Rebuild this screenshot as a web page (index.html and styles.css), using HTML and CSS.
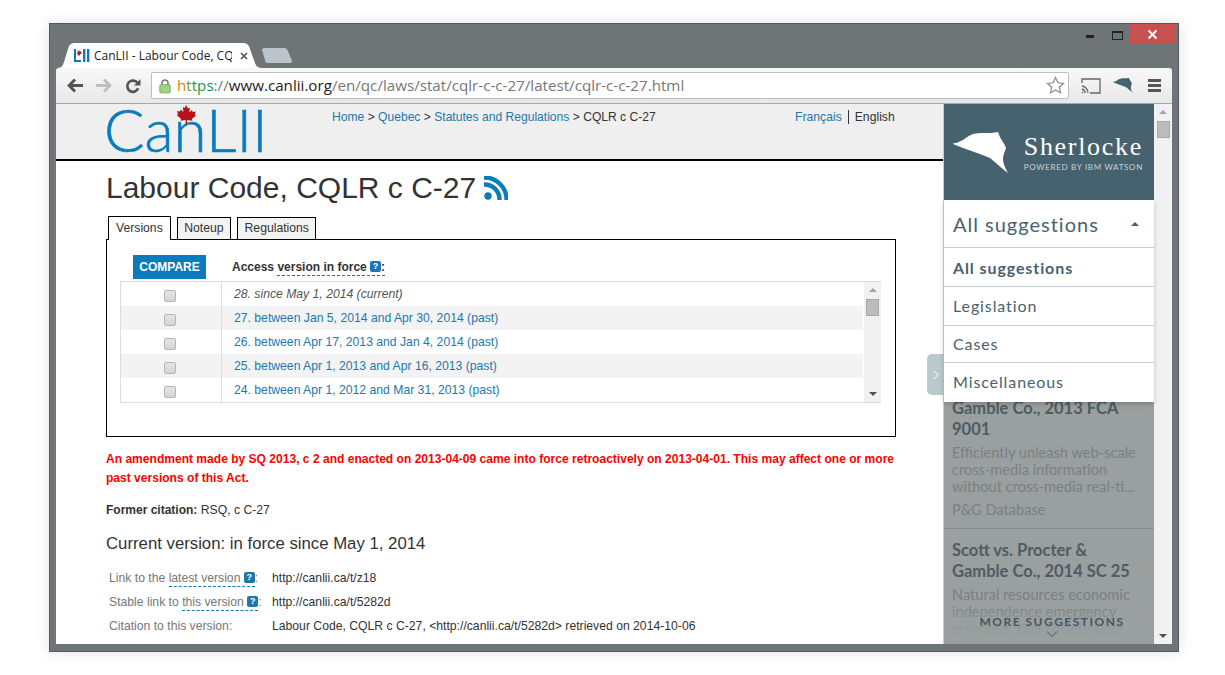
FILE: index.html
```html
<!DOCTYPE html>
<html lang="en">
<head>
    <meta charset="UTF-8">
    <title>CanLII - Labour Code, CQLR c C-27</title>
    <link rel="stylesheet" href="styles.css">
</head>
<body>
    <div class="window">
        <!-- Window controls -->
        <div class="win-controls">
            <span class="win-min"></span>
            <span class="win-max"></span>
            <span class="win-close">
                <svg width="11" height="11" viewBox="0 0 11 11"><path d="M1.5 1.5l8 8M9.5 1.5l-8 8" stroke="#fff" stroke-width="2"/></svg>
            </span>
        </div>

        <!-- Tab strip -->
        <div class="tabstrip">
            <div class="tab">
                <svg class="tab-shape" width="206" height="25" viewBox="0 0 206 25"><path d="M0 25C5 25 6 22 7 19L11 6C12 2 14 0 18 0H186C190 0 192 2 193 6L198 20C199 23 201 25 206 25Z" fill="#fff"/></svg>
                <svg class="favicon" width="16" height="13" viewBox="0 0 16 13">
                    <path d="M0 0h2v11h5v2H0z" fill="#0a7cbd"/>
                    <rect x="9" width="2.4" height="13" fill="#0a7cbd"/>
                    <rect x="13" width="2.4" height="13" fill="#0a7cbd"/>
                    <path d="M5 1l1 1.500 1.500-.5-.5 1.700 1 .8-2 .8v1.500l-1-.6-1.500.6.500-1.500-1.500-.8 1.200-.8-.5-1.500 1.300.3z" fill="#c8171e"/>
                </svg>
                <span class="tab-title">CanLII - Labour Code, CQLR c C-27</span>
                <svg class="tab-x" width="8" height="8" viewBox="0 0 8 8"><path d="M1 1l6 6M7 1L1 7" stroke="#555" stroke-width="1.600"/></svg>
            </div>
            <svg class="newtab" width="32" height="15" viewBox="0 0 32 15"><path d="M1 2C1 1 2 0 3 0H23C25 0 26 1 27 3L31 13C31 14 31 15 29 15H7C5 15 4 14 4 12Z" fill="#bcc4cb"/></svg>
        </div>

        <!-- Toolbar -->
        <div class="toolbar">
            <svg class="nav-icon" width="16" height="15" viewBox="0 0 16 15"><path d="M8 1.500L2.200 7.500l5.800 6M2.500 7.500H16" fill="none" stroke="#555" stroke-width="3"/></svg>
            <svg class="nav-icon" width="16" height="15" viewBox="0 0 16 15"><path d="M8 1.500l5.800 6-5.800 6M13.500 7.500H0" fill="none" stroke="#bfbfbf" stroke-width="3"/></svg>
            <svg class="nav-icon" width="16" height="16" viewBox="0 0 17 17"><path d="M14 11a6 6 0 1 1-.5-5.500" fill="none" stroke="#555" stroke-width="2.800"/><path d="M16.500 1v7h-7z" fill="#555"/></svg>
            <div class="omnibox">
                <svg class="lock" width="12" height="16" viewBox="0 0 14 17"><path d="M3.500 8V5a3.500 3.500 0 0 1 7 0v3" fill="none" stroke="#777" stroke-width="1.700"/><rect x="1" y="7" width="12" height="9.500" rx="1" fill="#9fd47f" stroke="#6ea552"/></svg>
                <span class="url"><span class="url-scheme"><span class="u1">h</span><span class="u2">t</span><span class="u3">t</span><span class="u4">ps</span></span><span class="url-sep">://</span><span class="url-host">www.canlii.org</span><span class="url-sep">/en/qc/laws/stat/cqlr-c-c-27/latest/cqlr-c-c-27.html</span></span>
                <svg class="star" width="19" height="19" viewBox="0 0 19 19"><path d="M9.500 1.500l2.400 5.300 5.700.6-4.300 3.800 1.300 5.700-5.100-3-5.100 3 1.300-5.700L1.400 7.400l5.700-.6z" fill="#fff" stroke="#8a8a8a" stroke-width="1.200"/></svg>
            </div>
            <svg class="tool-icon" width="20" height="16" viewBox="0 0 20 16"><path d="M1 5V1h18v14H9" fill="none" stroke="#666" stroke-width="1.300"/><path d="M1 8a7 7 0 0 1 6 7M1 11a4 4 0 0 1 3 4M1 14l1 1" fill="none" stroke="#666" stroke-width="1.300"/></svg>
            <svg class="tool-icon" width="20" height="15" viewBox="0 0 56 42"><path d="M0 11.500C4 11 7 9.500 10 8 14 5 17 3 20 2c4-1 7-1 10-1 6 0 11 0 15-1 1 3 2 5 3 7 2 3 4 6 5 9-1 3-3 7-3 11 0 5 3 10 5 14C46 34 41 29 37 26 26 21 11 17 0 12z" fill="#47626f"/></svg>
            <span class="menu-icon"><i></i><i></i><i></i></span>
        </div>

        <!-- Page area -->
        <div class="viewport">
            <div class="page">
                <header class="site-head">
                    <div class="logo">
                        <span class="logo-text">CanLII</span>
                        <svg class="leaf" width="20" height="20" viewBox="0 0 20 20"><path d="M10 0l2 3.500 2-1-.7 5 2.700-2.500.8 2 3-.5-1 3.200 1.200.8-4.200 3.500.6 1.800-5.200-.8-.4 4.500H9.600l.1-4.500-5.200.8.600-1.800L.8 10l1.200-.8L1 6l3 .5.800-2 2.700 2.500-.7-5 2 1z" fill="#b5121b"/></svg>
                    </div>
                    <nav class="crumbs"><a href="#">Home</a> &gt; <a href="#">Quebec</a> &gt; <a href="#">Statutes and Regulations</a> &gt; CQLR c C-27</nav>
                    <div class="langs"><a href="#">Français</a><span>English</span></div>
                </header>

                <main class="content">
                    <h1 class="title">Labour Code, CQLR c C-27
                        <svg class="rss" width="24" height="24" viewBox="0 0 24 24"><circle cx="4" cy="20" r="3.700" fill="#0a7cbd"/><path d="M0 8.500A15 15 0 0 1 15.500 24M0 1.500A22 22 0 0 1 22.500 24" fill="none" stroke="#0a7cbd" stroke-width="4.300"/></svg>
                    </h1>

                    <div class="tabs">
                        <span class="page-tab active">Versions</span>
                        <span class="page-tab">Noteup</span>
                        <span class="page-tab">Regulations</span>
                    </div>

                    <section class="versions">
                        <div class="versions-head">
                            <span class="compare">COMPARE</span>
                            <span class="access">Access <span class="dashed">version in force <i class="help">?</i>:</span></span>
                        </div>
                        <div class="list">
                            <div class="rows">
                                <div class="row current"><span class="check"><b></b></span><span class="row-text">28. since May 1, 2014 (current)</span></div>
                                <div class="row alt"><span class="check"><b></b></span><a href="#" class="row-text">27. between Jan 5, 2014 and Apr 30, 2014 (past)</a></div>
                                <div class="row"><span class="check"><b></b></span><a href="#" class="row-text">26. between Apr 17, 2013 and Jan 4, 2014 (past)</a></div>
                                <div class="row alt"><span class="check"><b></b></span><a href="#" class="row-text">25. between Apr 1, 2013 and Apr 16, 2013 (past)</a></div>
                                <div class="row"><span class="check"><b></b></span><a href="#" class="row-text">24. between Apr 1, 2012 and Mar 31, 2013 (past)</a></div>
                            </div>
                            <div class="scrollbar small">
                                <span class="arrow up"></span>
                                <span class="thumb"></span>
                                <span class="arrow down"></span>
                            </div>
                        </div>
                    </section>

                    <p class="warning">An amendment made by SQ 2013, c 2 and enacted on 2013-04-09 came into force retroactively on 2013-04-01. This may affect one or more past versions of this Act.</p>
                    <p class="former"><strong>Former citation:</strong> RSQ, c C-27</p>
                    <h2 class="current-version">Current version: in force since May 1, 2014</h2>

                    <div class="meta">
                        <div class="meta-row"><span class="meta-label">Link to the <span class="dashed">latest version <i class="help">?</i></span>:</span><span>http://canlii.ca/t/z18</span></div>
                        <div class="meta-row"><span class="meta-label">Stable link to <span class="dashed">this version <i class="help">?</i></span>:</span><span>http://canlii.ca/t/5282d</span></div>
                        <div class="meta-row"><span class="meta-label">Citation to this version:</span><span>Labour Code, CQLR c C-27, &lt;http://canlii.ca/t/5282d&gt; retrieved on 2014-10-06</span></div>
                    </div>
                </main>
            </div>

            <!-- Sherlocke extension panel -->
            <aside class="sherlocke">
                <div class="handle">
                    <svg width="6" height="10" viewBox="0 0 6 10"><path d="M1 1l4 4-4 4" fill="none" stroke="#fff"/></svg>
                </div>
                <div class="brand">
                    <svg class="hat" width="56" height="42" viewBox="0 0 56 42"><path d="M0 11.500C4 11 7 9.500 10 8 14 5 17 3 20 2c4-1 7-1 10-1 6 0 11 0 15-1 1 3 2 5 3 7 2 3 4 6 5 9-1 3-3 7-3 11 0 5 3 10 5 14C46 34 41 29 37 26 26 21 11 17 0 12z" fill="#fff"/></svg>
                    <div class="brand-text">
                        <div class="brand-name">Sherlocke</div>
                        <div class="brand-sub">POWERED BY IBM WATSON</div>
                    </div>
                </div>
                <div class="filter">
                    <div class="filter-head"><span>All suggestions</span><span class="caret"></span></div>
                    <div class="filter-item selected">All suggestions</div>
                    <div class="filter-item">Legislation</div>
                    <div class="filter-item short">Cases</div>
                    <div class="filter-item last">Miscellaneous</div>
                </div>
                <div class="results">
                    <div class="result">
                        <h3>Gamble Co., 2013 FCA 9001</h3>
                        <p>Efficiently unleash web-scale cross-media information without cross-media real-ti...</p>
                        <p class="source">P&amp;G Database</p>
                    </div>
                    <div class="result">
                        <h3>Scott vs. Procter &amp; Gamble Co., 2014 SC 25</h3>
                        <p>Natural resources economic independence emergency response, civil society save</p>
                    </div>
                    <div class="more">
                        <span>MORE SUGGESTIONS</span>
                        <svg width="12" height="6" viewBox="0 0 12 6"><path d="M1 .5l5 5 5-5" fill="none" stroke="#47565e"/></svg>
                    </div>
                </div>
            </aside>

            <div class="scrollbar">
                <span class="arrow up"></span>
                <span class="thumb"></span>
                <span class="arrow down"></span>
            </div>
        </div>
    </div>
</body>
</html>
```

FILE: styles.css
```css
/* Reset some default styles */
* {
    margin: 0;
    padding: 0;
    box-sizing: border-box;
}

html, body {
    height: 675px;
    overflow: hidden;
}

body {
    background-color: #fff;
    font-family: "Liberation Sans", Arial, sans-serif;
    font-size: 12.2px;
    color: #333;
}

a {
    color: #1f77ad;
    text-decoration: none;
}

/* Browser window */
.window {
    position: absolute;
    left: 49px;
    top: 23px;
    width: 1130px;
    height: 629px;
    background-color: #6f7477;
    border: 1px solid #54585b;
    box-shadow: 0 0 14px rgba(0, 0, 0, 0.12);
    padding: 19px 6px 7px;
    display: flex;
    flex-direction: column;
}

.win-controls {
    position: absolute;
    top: 0;
    right: 3px;
    display: flex;
    align-items: flex-start;
}

.win-min {
    width: 8px;
    height: 3px;
    background-color: #222;
    margin: 11px 18px 0 0;
}

.win-max {
    width: 11px;
    height: 9px;
    border: 1px solid #222;
    border-top-width: 2px;
    margin: 7px 7px 0 0;
}

.win-close {
    width: 45px;
    height: 20px;
    background-color: #c75050;
    display: flex;
    align-items: center;
    justify-content: center;
}

.tabstrip {
    height: 25px;
    display: flex;
    align-items: flex-end;
    flex-shrink: 0;
}

.tab {
    position: relative;
    width: 206px;
    height: 25px;
    margin-left: 1px;
    display: flex;
    align-items: center;
    padding: 0 0 0 17px;
}

.tab-shape {
    position: absolute;
    left: 0;
    top: 0;
}

.favicon {
    position: relative;
    flex-shrink: 0;
    margin-right: 4px;
}

.tab-title {
    position: relative;
    width: 138px;
    overflow: hidden;
    white-space: nowrap;
    font-family: "Open Sans", sans-serif;
    font-size: 12px;
    color: #222;
}

.tab-x {
    position: relative;
    margin-left: 8px;
}

.newtab {
    margin: 0 0 5px -2px;
}

.toolbar {
    height: 36px;
    flex-shrink: 0;
    display: flex;
    align-items: center;
    background: linear-gradient(#f8f8f8, #e8e8e8);
    border-bottom: 1px solid #a9a9a9;
    border-radius: 3px 3px 0 0;
    padding: 0 0 0 11px;
}

.nav-icon {
    margin-right: 13px;
    flex-shrink: 0;
}

.omnibox {
    width: 918px;
    height: 27px;
    margin-left: -3px;
    background-color: #fff;
    border: 1px solid #bdbdbd;
    border-radius: 2px;
    display: flex;
    align-items: center;
    padding: 0 3px 0 7px;
    flex-shrink: 0;
}

.lock {
    margin-right: 6px;
    flex-shrink: 0;
}

.url {
    flex: 1;
    white-space: nowrap;
    font-family: "Open Sans", sans-serif;
    font-size: 15.17px;
    padding-bottom: 2px;
}

.url-host { color: #222; }
.url-sep { color: #777; }
.u1 { color: #d08a00; }
.u2 { color: #6a9a20; }
.u3 { color: #2a9a30; }
.u4 { color: #129a40; }

.tool-icon {
    margin-left: 12px;
    flex-shrink: 0;
}

.menu-icon {
    margin-left: 15px;
    display: flex;
    flex-direction: column;
    gap: 2px;
}

.menu-icon i {
    display: block;
    width: 13px;
    height: 3px;
    background-color: #555;
}

/* Page */
.viewport {
    position: relative;
    flex: 1;
    min-height: 0;
    background-color: #fff;
    display: flex;
    overflow: hidden;
}

.page {
    width: 888px;
    flex-shrink: 0;
    border-right: 1px solid #ccc;
}

.site-head {
    height: 57px;
    background-color: #efefef;
    border-bottom: 2px solid #000;
    position: relative;
    display: flex;
    align-items: flex-start;
    padding-left: 48px;
}

.logo {
    position: relative;
    width: 228px;
    height: 55px;
}

.logo-text {
    font-family: "Lato", sans-serif;
    font-weight: 300;
    font-size: 60px;
    line-height: 55px;
    -webkit-text-stroke: 0.6px #0a7cbd;
    color: #0a7cbd;
    display: block;
    margin-top: -2px;
}

.leaf {
    position: absolute;
    left: 72px;
    top: 1px;
}

.crumbs {
    width: 463px;
    padding-top: 6px;
    font-size: 12.1px;
    color: #333;
}

.langs {
    margin-top: 6px;
    display: flex;
    line-height: 14px;
}

.langs a {
    padding-right: 6px;
    border-right: 1px solid #333;
    margin-right: 6px;
}

.content {
    padding: 0 47px 0 50px;
}

.title {
    font-size: 30px;
    font-weight: normal;
    line-height: 36px;
    margin-top: 9px;
    color: #333;
    display: flex;
    align-items: center;
    gap: 8px;
}

.tabs {
    display: flex;
    align-items: flex-end;
    margin-top: 9px;
    height: 24px;
    padding-left: 2px;
    position: relative;
    z-index: 1;
}

.page-tab {
    height: 22px;
    border: 1px solid #000;
    border-bottom: none;
    background-color: #f3f3f3;
    padding: 3px 6.5px 0;
    margin-right: 6px;
}

.page-tab.active {
    height: 24px;
    background-color: #fff;
    margin-bottom: -1px;
    margin-right: 6px;
    padding: 4px 7px 0;
}

.versions {
    height: 198px;
    border: 1px solid #000;
    padding: 15px 14px 0 13px;
}

.versions-head {
    display: flex;
    align-items: flex-start;
    height: 25px;
    padding-left: 13px;
}

.compare {
    width: 73px;
    height: 24px;
    background-color: #0a7cbd;
    color: #fff;
    font-size: 12px;
    font-weight: bold;
    text-align: center;
    line-height: 24px;
}

.access {
    margin-left: 26px;
    font-size: 12px;
    font-weight: bold;
    padding-top: 5px;
}

.dashed {
    border-bottom: 1px dashed #0a7cbd;
    padding-bottom: 1px;
}

.help {
    display: inline-block;
    width: 11px;
    height: 11px;
    background-color: #1f77ad;
    border-radius: 2px;
    color: #fff;
    font-size: 9px;
    font-weight: bold;
    font-style: normal;
    line-height: 11px;
    text-align: center;
    vertical-align: 2px;
}

.list {
    height: 122px;
    margin-top: 1px;
    border-top: 1px solid #ddd;
    border-bottom: 1px solid #ddd;
    border-left: 1px solid #ddd;
    display: flex;
}

.rows {
    flex: 1;
    padding-right: 1px;
}

.row {
    height: 24px;
    display: flex;
    align-items: center;
}

.row.alt {
    background-color: #f3f3f3;
}

.check {
    width: 101px;
    height: 24px;
    border-right: 1px solid #ddd;
    display: flex;
    align-items: center;
    justify-content: center;
    padding-right: 2px;
    background-color: #fff;
}

.row.alt .check {
    background-color: #f3f3f3;
}

.check b {
    display: block;
    width: 12px;
    height: 12px;
    border: 1px solid #b4b4b4;
    border-radius: 2px;
    background: linear-gradient(#e4e4e4, #d4d4d4);
    margin-top: 3px;
}

.row-text {
    margin-left: 12px;
}

.current .row-text {
    font-style: italic;
    color: #555;
}

.scrollbar {
    width: 18px;
    background-color: #f1f1f1;
    display: flex;
    flex-direction: column;
    align-items: center;
    flex-shrink: 0;
    position: relative;
}

.scrollbar.small {
    width: 17px;
}

.arrow {
    width: 0;
    height: 0;
    border-left: 4px solid transparent;
    border-right: 4px solid transparent;
    position: absolute;
}

.arrow.up {
    top: 6px;
    border-bottom: 4px solid #a3a3a3;
}

.arrow.down {
    bottom: 6px;
    border-top: 4px solid #505050;
}

.thumb {
    width: 13px;
    height: 17px;
    margin-top: 17px;
    background-color: #bcbcbc;
    border: 1px solid #a8a8a8;
}

.warning {
    margin-top: 13px;
    color: #f00;
    font-size: 12.05px;
    font-weight: bold;
    line-height: 19px;
}

.former {
    margin-top: 13px;
    line-height: 19px;
}

.former strong {
    font-size: 12px;
}

.current-version {
    margin-top: 13px;
    font-size: 16.75px;
    font-weight: normal;
    line-height: 22px;
}

.meta {
    margin: 11px 0 0 3px;
}

.meta-row {
    height: 24px;
    display: flex;
    align-items: center;
}

.meta-label {
    width: 163px;
    color: #777;
}

/* Sherlocke panel */
.sherlocke {
    width: 210px;
    flex-shrink: 0;
    position: relative;
    background-color: #9a9fa0;
    font-family: "Lato", sans-serif;
}

.handle {
    position: absolute;
    left: -17px;
    top: 250px;
    width: 17px;
    height: 41px;
    background-color: #b9c9cc;
    border-radius: 5px 0 0 5px;
    display: flex;
    align-items: center;
    justify-content: center;
}

.brand {
    height: 96px;
    background-color: #47626f;
    display: flex;
    align-items: center;
    padding: 2px 11px 0 9px;
    justify-content: space-between;
}

.brand-text {
    color: #fff;
    text-align: right;
}

.brand-name {
    font-family: "Liberation Serif", serif;
    font-size: 26px;
    letter-spacing: 1.7px;
    line-height: 28px;
}

.brand-sub {
    font-size: 8px;
    letter-spacing: 0.7px;
    color: #c7d1d6;
    line-height: 12px;
}

.filter {
    height: 202px;
    background-color: #fff;
    color: #47626f;
    box-shadow: 0 2px 5px rgba(0, 0, 0, 0.2);
    position: relative;
    z-index: 1;
}

.filter-head {
    height: 48px;
    font-size: 20px;
    letter-spacing: 1px;
    padding: 0 15px 0 9px;
    display: flex;
    align-items: center;
    justify-content: space-between;
    border-bottom: 1px solid #c3ced2;
}

.caret {
    width: 0;
    height: 0;
    border-left: 4px solid transparent;
    border-right: 4px solid transparent;
    border-bottom: 4px solid #47626f;
}

.filter-item {
    height: 39px;
    font-size: 16px;
    letter-spacing: 0.9px;
    padding: 0 0 2px 9px;
    display: flex;
    align-items: center;
    border-bottom: 1px solid #c3ced2;
}

.filter-item.selected {
    font-weight: bold;
    padding-bottom: 0;
}

.filter-item.short {
    height: 37px;
}

.filter-item.last {
    height: 39px;
    border-bottom: none;
}

.results {
    height: 242px;
    overflow: hidden;
    position: relative;
}

.result {
    padding: 0 8px 10px;
    border-bottom: 1px solid #858c8e;
    margin-top: -4px;
}

.result + .result {
    margin-top: 0;
    padding-top: 11px;
}

.result h3 {
    font-size: 16.5px;
    line-height: 21px;
    color: #4f5c62;
    margin-bottom: 4px;
}

.result p {
    font-size: 14.6px;
    line-height: 17px;
    color: #7b8082;
}

.result .source {
    margin-top: 6px;
}

.more {
    position: absolute;
    left: 0;
    right: 0;
    bottom: 0;
    height: 40px;
    display: flex;
    flex-direction: column;
    align-items: center;
    background: linear-gradient(rgba(154, 159, 160, 0), rgba(154, 159, 160, 0.9) 70%);
    color: #47565e;
    font-size: 12px;
    font-weight: bold;
    letter-spacing: 1.5px;
    padding: 10px 0 0 6px;
}

.more svg {
    margin-top: 2px;
}
```
